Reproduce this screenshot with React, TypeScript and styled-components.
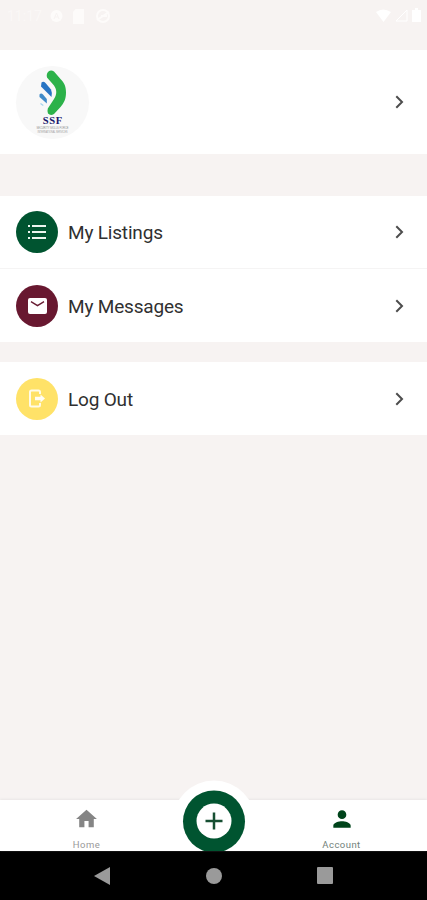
import React from "react";
import styled, { createGlobalStyle } from "styled-components";

const GlobalStyle = createGlobalStyle`
  * { box-sizing: border-box; }
  body { margin: 0; background: #f7f3f2; font-family: Roboto, "Liberation Sans", sans-serif; }
  svg { display: block; flex: none; }
`;

const Screen = styled.div`
  width: 427px;
  height: 900px;
  display: flex;
  flex-direction: column;
  background: #f7f3f2;
  overflow: hidden;
`;

const StatusBar = styled.header`
  height: 50px;
  display: flex;
  align-items: flex-start;
  justify-content: space-between;
  padding: 8px 6px 0 7px;
  color: #fdfbfa;
  font-size: 14px;
  line-height: 16px;
`;

const StatusGroup = styled.div<{ $gap: number }>`
  display: flex;
  align-items: center;
  gap: ${({ $gap }) => $gap}px;
`;

const Clock = styled.span`
  width: 34px;
  opacity: 0.6;
`;

const Row = styled.div<{ $height: number; $divider?: boolean; $top?: number }>`
  height: ${({ $height }) => $height}px;
  margin-top: ${({ $top = 0 }) => $top}px;
  flex: none;
  display: flex;
  align-items: center;
  padding: 0 22px 0 16px;
  background: #fff;
  border-bottom: ${({ $divider }) => ($divider ? "1px solid #f5f4f4" : "none")};
`;

const Avatar = styled.div`
  width: 73px;
  height: 73px;
  border-radius: 50%;
  background: #f8f8f8;
  overflow: hidden;
`;

const Badge = styled.div<{ $color: string }>`
  width: 42px;
  height: 42px;
  border-radius: 50%;
  display: grid;
  place-items: center;
  background: ${({ $color }) => $color};
`;

const Label = styled.span`
  margin-left: 10px;
  padding-top: 2px;
  font-size: 19px;
  line-height: 24px;
  letter-spacing: -0.18px;
  color: #303030;
`;

const Spacer = styled.div`
  flex: 1;
`;

const TabBar = styled.nav`
  height: 51px;
  position: relative;
  display: grid;
  grid-template-columns: 173px 81px 173px;
  background: #fff;
  box-shadow: 0 -1px 2px #eae7e6;
`;

const Tab = styled.div<{ $side: "left" | "right"; $color: string }>`
  display: flex;
  flex-direction: column;
  align-items: center;
  padding-top: 6px;
  padding-left: ${({ $side }) => ($side === "right" ? "2px" : "0")};
  color: ${({ $color }) => $color};
`;

const TabLabel = styled.span<{ $color: string }>`
  margin-top: 7px;
  font-size: 9.5px;
  line-height: 12px;
  letter-spacing: 0.45px;
  color: ${({ $color }) => $color};
`;

const AddButton = styled.div`
  position: absolute;
  left: 172px;
  top: -20px;
  width: 84px;
  height: 71px;
  overflow: hidden;
`;

const SystemBar = styled.footer`
  height: 49px;
  flex: none;
  display: grid;
  grid-template-columns: 111px 111px 111px;
  justify-content: center;
  justify-items: center;
  align-items: center;
  background: #000;
`;

const Chevron = () => (
  <svg width="11" height="16" viewBox="0 0 11 16" fill="none" stroke="#4d4d4d" strokeWidth="2">
    <path d="M2.3 2.3 8 8l-5.7 5.7" />
  </svg>
);

const Logo = () => (
  <svg width="73" height="73" viewBox="0 0 73 73">
    <path
      d="M32.5 5.500Q35 3.500 38 5.500L44.500 13C48.500 17 50 20.500 50 26.500C50 33 48 37 44.500 41L38 48Q34.500 50 32 47.500Q31 45.500 31.800 42.500L38 33C41 28 41 24 38 19.500L31 11.500Q30 8 32.500 5.500Z"
      fill="#2cb24a"
    />
    <path d="M25.500 16.500Q27.500 15 29.500 17L35 23.500Q36.500 27 35.500 31L25 20.500Z" fill="#2875c4" />
    <path d="M23.500 28.500Q25 26.500 27 28.500L30.800 33V37.500L23.500 31Z" fill="#3f8ac8" />
    <path d="M24.500 37.500 27.300 39.500" stroke="#a5d3ed" strokeWidth="1.300" />
    <text x="36.500" y="58.300" textAnchor="middle" textLength="19.500" fontFamily="Liberation Serif, serif" fontWeight="700" fontSize="10.500" fill="#17176b">
      SSF
    </text>
    <text x="36.500" y="62.700" textAnchor="middle" textLength="32" lengthAdjust="spacingAndGlyphs" fontFamily="Liberation Sans, sans-serif" fontSize="4.200" fill="#888">
      SECURITY SKILLS FORCE
    </text>
    <text x="36.500" y="67" textAnchor="middle" textLength="30" lengthAdjust="spacingAndGlyphs" fontFamily="Liberation Sans, sans-serif" fontSize="4" fill="#999">
      INTERNATIONAL SERVICES
    </text>
  </svg>
);

const ListIcon = () => (
  <svg width="18" height="14" viewBox="0 0 18 14" fill="#edf6ef">
    <path d="M0 0h2v2H0zM4 0h14v2H4zM0 6h2v2H0zM4 6h14v2H4zM0 12h2v2H0zM4 12h14v2H4z" />
  </svg>
);

const MailIcon = () => (
  <svg width="19" height="16" viewBox="0 0 19 16">
    <rect width="19" height="16" rx="2" fill="#fff" />
    <path d="m3 3.700 6.500 4 6.500-4" fill="none" stroke="#671b31" strokeWidth="1.400" />
  </svg>
);

const LogoutIcon = () => (
  <svg width="18" height="19" viewBox="0 0 18 19">
    <path d="M12 5V3Q12 1.500 10.500 1.500H3.500Q2 1.500 2 3V16Q2 17.500 3.500 17.500H10.500Q12 17.500 12 16V14" fill="none" stroke="#fffbe9" strokeWidth="2" />
    <path d="M7 7.700h5.500V5.500l4.500 4-4.500 4v-2.200H7z" fill="#fffdf4" />
  </svg>
);

export default function App() {
  return (
    <Screen>
      <GlobalStyle />
      <StatusBar>
        <StatusGroup $gap={9}>
          <Clock>11:17</Clock>
          <svg width="13" height="14" viewBox="0 0 13 14">
            <circle cx="6.500" cy="7" r="6" fill="currentColor" />
            <path d="m4 10 2.500-6L9 10M5 8h3" fill="none" stroke="#f7f3f2" />
          </svg>
          <svg width="13" height="15" viewBox="0 0 13 15">
            <path d="M3.500 0H12v15H1V3z" fill="currentColor" />
          </svg>
          <svg width="18" height="14" viewBox="0 0 18 14">
            <circle cx="9" cy="7" r="6" fill="none" stroke="currentColor" strokeWidth="2" />
            <path d="M3 11 15 3M7 7h6" stroke="currentColor" strokeWidth="2" />
          </svg>
        </StatusGroup>
        <StatusGroup $gap={4}>
          <svg width="15" height="13" viewBox="0 0 15 13"><path d="M0 3Q7 -2 15 3L7.500 13Z" fill="#fff" /></svg>
          <svg width="13" height="13" viewBox="0 0 13 13"><path d="M12 1v11H1z" fill="none" stroke="#fff" /></svg>
          <svg width="9" height="14" viewBox="0 0 9 14"><path d="M3 0h3v2h3v12H0V2h3z" fill="#fff" /></svg>
        </StatusGroup>
      </StatusBar>
      <Row $height={104}>
        <Avatar><Logo /></Avatar>
        <Spacer />
        <Chevron />
      </Row>
      <Row $height={73} $top={42} $divider>
        <Badge $color="#005430"><ListIcon /></Badge>
        <Label>My Listings</Label>
        <Spacer />
        <Chevron />
      </Row>
      <Row $height={73}>
        <Badge $color="#681830"><MailIcon /></Badge>
        <Label>My Messages</Label>
        <Spacer />
        <Chevron />
      </Row>
      <Row $height={73} $top={20}>
        <Badge $color="#ffe268"><LogoutIcon /></Badge>
        <Label>Log Out</Label>
        <Spacer />
        <Chevron />
      </Row>
      <Spacer />
      <TabBar>
        <Tab $side="left" $color="#858585">
          <svg width="25" height="26" viewBox="0 0 24 24" fill="currentColor">
            <path d="M10 20v-6h4v6h5v-8h3L12 3 2 12h3v8z" />
          </svg>
          <TabLabel $color="#999">Home</TabLabel>
        </Tab>
        <span />
        <Tab $side="right" $color="#00441b">
          <svg width="26" height="26" viewBox="0 0 24 24" fill="currentColor">
            <path d="M12 12a4 4 0 1 0 0-8 4 4 0 0 0 0 8zm0 2c-2.700 0-8 1.300-8 4v2h16v-2c0-2.700-5.300-4-8-4z" />
          </svg>
          <TabLabel $color="#71817a">Account</TabLabel>
        </Tab>
        <AddButton>
          <svg width="84" height="84" viewBox="0 0 84 84">
            <circle cx="42" cy="42" r="41.500" fill="#fff" />
            <circle cx="42" cy="41.500" r="31" fill="#005430" />
            <circle cx="42" cy="41" r="17.500" fill="#fff" />
            <path d="M42 32.500v17M33.500 41h17" stroke="#164f32" strokeWidth="2.500" />
          </svg>
        </AddButton>
      </TabBar>
      <SystemBar>
        <svg width="18" height="18" viewBox="0 0 18 18"><path d="M0 9 16 0v18z" fill="#9a9a9a" /></svg>
        <svg width="16" height="16" viewBox="0 0 16 16"><circle cx="8" cy="8" r="8" fill="#9a9a9a" /></svg>
        <svg width="16" height="17" viewBox="0 0 16 17"><rect width="16" height="17" rx="1" fill="#9a9a9a" /></svg>
      </SystemBar>
    </Screen>
  );
}
